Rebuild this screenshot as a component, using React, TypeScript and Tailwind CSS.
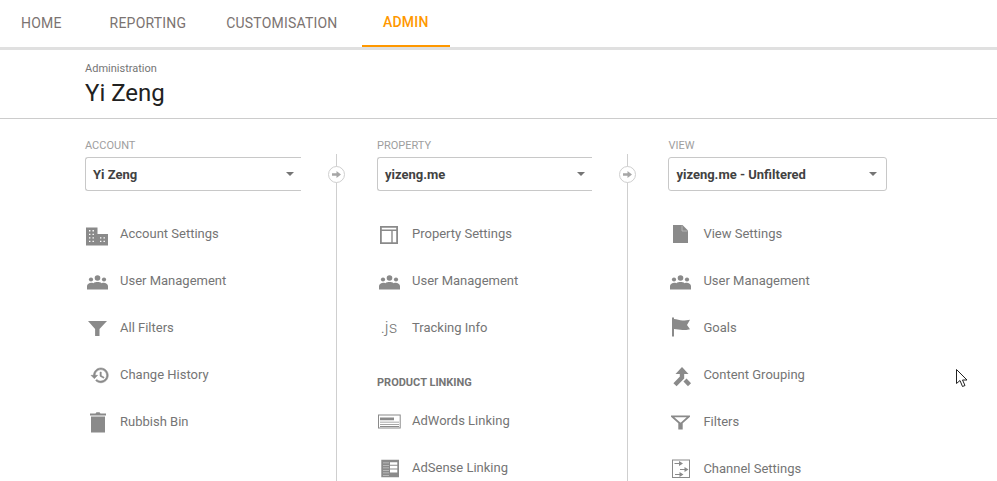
import type { ReactNode } from "react";

const fill = "#8a8a8a";

const Svg = ({ children }: { children: ReactNode }) => (
  <svg viewBox="0 0 24 24" width="24" height="24" fill={fill}>
    {children}
  </svg>
);

const People = () => (
  <Svg>
    <circle cx="12.500" cy="9" r="2.800" />
    <circle cx="6" cy="10.500" r="2.100" />
    <circle cx="19" cy="10.500" r="2.100" />
    <path d="M2 20.500v-3.400c0-2 2.300-3.300 4.300-3.300.8 0 1.400.1 2 .4 1.200-.8 2.900-1.100 4.200-1.100s3 .3 4.200 1.100c.6-.3 1.200-.4 2-.4 2 0 4.300 1.300 4.300 3.300v3.400z" />
  </Svg>
);

const icons: Record<string, ReactNode> = {
  building: (
    <Svg>
      <path
        fillRule="evenodd"
        d="M1 5.500h11.500V12H23v11.500H1zM4 8v1.400h1.400V8zm3.500 0v1.400h1.400V8zM4 11.700v1.400h1.400v-1.400zm3.500 0v1.400h1.400v-1.400zM4 15.200v1.400h1.400v-1.400zm3.500 0v1.400h1.400v-1.400zM4 18.700v1.400h1.400v-1.400zm3.500 0v1.400h1.400v-1.400zm7.500-3.500v1.400h1.400v-1.400zm3.500 0v1.400h1.400v-1.400zM15 18.700v1.400h1.400v-1.400zm3.500 0v1.400h1.400v-1.400z"
      />
    </Svg>
  ),
  people: <People />,
  funnel: (
    <Svg>
      <path d="M3 5h19l-7.500 8v7h-4.400v-7z" />
    </Svg>
  ),
  history: (
    <Svg>
      <path
        transform="translate(5.200 2.500) scale(.82)"
        stroke={fill}
        strokeWidth=".7"
        d="M13 3c-4.970 0-9 4.030-9 9H1l3.890 3.890.07.14L9 12H6c0-3.870 3.130-7 7-7s7 3.130 7 7-3.130 7-7 7c-1.930 0-3.680-.79-4.940-2.060l-1.420 1.420C8.270 19.990 10.510 21 13 21c4.970 0 9-4.030 9-9s-4.030-9-9-9zm-1 5v5l4.280 2.540.72-1.210-3.500-2.080V8H12z"
      />
    </Svg>
  ),
  bin: (
    <Svg>
      <path d="M6 6.500h14v16H6zM5 3.500h5.500l1-1.200h3l1 1.200H21v2H5z" />
    </Svg>
  ),
  layout: (
    <Svg>
      <path
        fillRule="evenodd"
        d="M3 4h18v18H3zm1.800 5v11.200h9.500V9zm10.900 0v11.200h3.500V9zM4.800 5.800v1.700h14.400V5.800z"
      />
    </Svg>
  ),
  js: <span className="text-[17px] font-light leading-none text-[#777]">.js</span>,
  adwords: (
    <Svg>
      <path fillRule="evenodd" d="M1 5.500h22.700v14H1zm1 1v12h20.700v-12z" />
      <path d="M3 8.500h14v2.700H3zM3 12.700h19v.9H3zM3 14.900h19v.9H3zM3 17h19v.9H3z" />
    </Svg>
  ),
  adsense: (
    <Svg>
      <path
        fillRule="evenodd"
        d="M4.300 3.800H22v17.400H4.300zM13 6.200v2.600h7.300V6.200zm0 3.600v2.800h7.300V9.800zm0 3.700v3h7.300v-3z"
      />
      <path d="M6 6.500h6v.8H6zM6 9h6v.8H6zM6 11.500h6v.8H6zM6 14h6v.8H6zM6 16.500h6v.8H6zM6 19h6v.8H6z" fill="#c8c8c8" />
    </Svg>
  ),
  file: (
    <Svg>
      <path d="M5 3h9.500L20 8.500V21H5z" />
      <path d="M14 3.500V9h5.500" fill="none" stroke="#c4c4c4" strokeWidth=".7" />
    </Svg>
  ),
  flag: (
    <Svg>
      <path d="M4 1.500h2v19H4zM6 3c3 0 5.500 1.500 8.500 1.500 2.700 0 5.500-.3 7.500-.8l-3 5.300 3 4.300c-2.500.6-5 .8-7.500.8-3 0-5.500-1-8.500-1z" />
    </Svg>
  ),
  merge: (
    <svg viewBox="0 0 24 24" width="24" height="24" fill="none" stroke={fill}>
      <path d="M14 4l6.500 7h-13z" fill={fill} stroke="none" />
      <path d="M14 10v4.500L7 21.800" strokeWidth="4.400" />
      <path d="M17 17l4.500 4.800" strokeWidth="4.200" />
    </svg>
  ),
  funnelWide: (
    <Svg>
      <path
        fillRule="evenodd"
        d="M3 5.500h19v1.200l-7.300 6.500v6.300h-4.400v-6.300L3 6.700zm3.300 1.700 6 5.200h.6l5.800-5.200z"
      />
    </Svg>
  ),
  channel: (
    <svg viewBox="0 0 24 24" width="24" height="24" fill="none" stroke={fill}>
      <rect x="4.500" y="3" width="17" height="17.500" strokeWidth="1" />
      <path d="M6.500 6.500h5M12 12.500h5M7 17.500h5" strokeWidth="1.200" />
      <path d="M11 4l4 2.500L11 9zM16.500 10l4 2.500-4 2.500zM11.500 15l4 2.500-4 2.500z" fill={fill} stroke="none" />
    </svg>
  ),
};

type Row = { icon: string; label: string };

const accountRows: Row[] = [
  { icon: "building", label: "Account Settings" },
  { icon: "people", label: "User Management" },
  { icon: "funnel", label: "All Filters" },
  { icon: "history", label: "Change History" },
  { icon: "bin", label: "Rubbish Bin" },
];

const propertyRows: Row[] = [
  { icon: "layout", label: "Property Settings" },
  { icon: "people", label: "User Management" },
  { icon: "js", label: "Tracking Info" },
];

const linkingRows: Row[] = [
  { icon: "adwords", label: "AdWords Linking" },
  { icon: "adsense", label: "AdSense Linking" },
];

const viewRows: Row[] = [
  { icon: "file", label: "View Settings" },
  { icon: "people", label: "User Management" },
  { icon: "flag", label: "Goals" },
  { icon: "merge", label: "Content Grouping" },
  { icon: "funnelWide", label: "Filters" },
  { icon: "channel", label: "Channel Settings" },
];

function NavRow({ row }: { row: Row }) {
  return (
    <div className="flex h-[47px] items-center gap-[11px]">
      <span className="flex h-6 w-6 shrink-0 items-center justify-center">{icons[row.icon]}</span>
      <span className="text-[13px] text-[#757575]">{row.label}</span>
    </div>
  );
}

function Picker({ value, open }: { value: string; open?: boolean }) {
  return (
    <div
      className={`flex h-[34px] items-center justify-between border border-[#c8c8c8] pl-[7px] ${
        open ? "rounded-l-[3px] border-r-0 pr-[7px]" : "rounded-[3px] pr-[9px]"
      }`}
    >
      <span className="pt-[2px] text-[13px] font-bold text-[#424242]">{value}</span>
      <span className="h-0 w-0 border-x-[4px] border-t-[4px] border-x-transparent border-t-[#757575]" />
    </div>
  );
}

function Column({
  label,
  value,
  open,
  width,
  children,
}: {
  label: string;
  value: string;
  open?: boolean;
  width: string;
  children: ReactNode;
}) {
  return (
    <div className={`shrink-0 ${width}`}>
      <div className="mb-[4px] flex h-[13px] items-center text-[11px] text-[#9e9e9e]">{label}</div>
      <Picker value={value} open={open} />
      <div className="mt-[19px]">{children}</div>
    </div>
  );
}

function Connector() {
  return (
    <div className="mt-[14px] w-[76px] shrink-0 pl-[35px]">
      <div className="relative h-[330px] w-px bg-[#cfcfcf]">
        <span className="absolute left-[-8px] top-[12px] flex h-[17px] w-[17px] items-center justify-center rounded-full border border-[#cfcfcf] bg-white">
          <svg viewBox="0 0 10 10" width="9" height="9" fill="#a6a6a6">
            <path d="M0 3.500h5V1l5 4-5 4V6.500H0z" />
          </svg>
        </span>
      </div>
    </div>
  );
}

export default function App() {
  return (
    <div className="relative h-[481px] w-[997px] overflow-hidden bg-white font-[Roboto,sans-serif]">
      <nav className="flex h-[50px] border-b-[3px] border-[#e0e0e0] text-[14px] tracking-[.2px] text-[#7b7371]">
        <a className="flex h-[47px] items-center pl-[21px] pr-[48px]">HOME</a>
        <a className="flex h-[47px] items-center pr-[40px]">REPORTING</a>
        <a className="flex h-[47px] items-center pr-[24px]">CUSTOMISATION</a>
        <a className="flex h-[47px] items-center border-b-2 border-[#ff9800] px-[21.5px] font-medium text-[#ff9800]">
          ADMIN
        </a>
      </nav>

      <header className="h-[69px] border-b border-[#cccccc] pl-[85px] pt-[12px]">
        <div className="text-[11px] leading-[13px] text-[#757575]">Administration</div>
        <h1 className="mt-[3px] text-[24px] leading-[30px] text-[#212121]">Yi Zeng</h1>
      </header>

      <main className="flex pl-[85px] pt-[21px]">
        <Column label="ACCOUNT" value="Yi Zeng" open width="w-[216px]">
          {accountRows.map((r) => (
            <NavRow key={r.label} row={r} />
          ))}
        </Column>
        <Connector />
        <Column label="PROPERTY" value="yizeng.me" open width="w-[215.4px]">
          {propertyRows.map((r) => (
            <NavRow key={r.label} row={r} />
          ))}
          <div className="flex h-[46px] items-center pt-[18px] text-[11px] font-bold text-[#757575]">
            PRODUCT LINKING
          </div>
          {linkingRows.map((r) => (
            <NavRow key={r.label} row={r} />
          ))}
        </Column>
        <Connector />
        <Column label="VIEW" value="yizeng.me - Unfiltered" width="w-[219px]">
          {viewRows.map((r) => (
            <NavRow key={r.label} row={r} />
          ))}
        </Column>
      </main>

      {/* mouse pointer caught in the screenshot */}
      <svg className="absolute left-[955px] top-[368px]" width="15" height="20" viewBox="0 0 15 20">
        <path
          d="M1.500 1.500v14l3.500-3 2.500 6 2.500-1-2.500-5.500h4.500z"
          fill="#fff"
          stroke="#222"
          strokeWidth="1"
        />
      </svg>
    </div>
  );
}
